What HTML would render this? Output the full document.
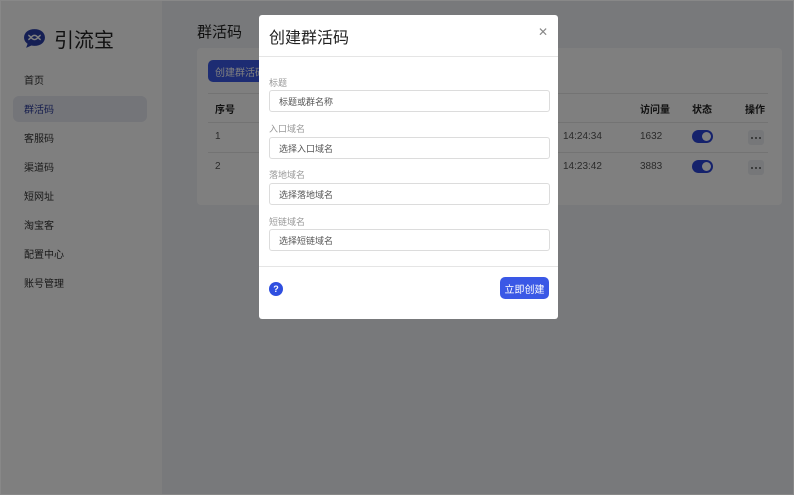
<!DOCTYPE html>
<html><head><meta charset="utf-8"><style>
*{margin:0;padding:0;box-sizing:border-box}
body{width:794px;height:495px;overflow:hidden;font-family:"Liberation Sans","Noto Sans CJK SC",sans-serif;background:#f1f3f6;position:relative;font-size:10px;color:#333}
.side{position:absolute;left:0;top:0;width:162px;height:495px;background:#fff}
.logo{position:absolute;left:23px;top:24px;display:flex;align-items:center}
.logo span{font-size:20px;margin-left:8px;color:#222}
.nav{position:absolute;left:24px;font-size:10px;color:#333}
.act{position:absolute;left:13px;top:96px;width:134px;height:26px;background:#e8eaf2;border-radius:6px}
.title{position:absolute;left:197px;top:21px;font-size:15px;color:#222}
.card{position:absolute;left:197px;top:48px;width:585px;height:157px;background:#fff;border-radius:4px}
.btn{position:absolute;left:11px;top:12px;width:70px;height:22px;background:#3a58e6;border-radius:5px;color:#fff;font-size:10px;display:flex;align-items:center;padding-left:7px}
.t{position:absolute;font-size:10px}
.hd{font-weight:bold;color:#222}
.ln{position:absolute;left:11px;width:560px;height:1px;background:#e6e6e6}
.tog{position:absolute;width:21px;height:13px;border-radius:7px;background:#2a45d8}
.tog:after{content:"";position:absolute;right:2px;top:2px;width:9px;height:9px;border-radius:50%;background:#fff}
.dots{position:absolute;width:16px;height:15px;background:#eceff3;border-radius:3px;display:flex;align-items:center;justify-content:center;gap:2px}
.dots i{width:2px;height:2px;background:#555;border-radius:50%}
.ov{position:absolute;left:0;top:0;width:794px;height:495px;background:rgba(0,0,0,.5)}
.modal{position:absolute;left:259px;top:15px;width:299px;height:304px;background:#fff;border-radius:3px}
.mh{position:absolute;left:10px;top:9px;font-size:16px;color:#222}
.x{position:absolute;right:10px;top:10px;font-size:12px;color:#888}
.hr{position:absolute;left:0;width:299px;height:1px;background:#e5e5e5}
.lb{position:absolute;left:10px;font-size:9px;color:#999}
.in{position:absolute;left:10px;width:281px;height:22px;border:1px solid #dcdcdc;border-radius:3px;font-size:9px;color:#555;display:flex;align-items:center;padding-left:9px}
.help{position:absolute;left:10px;top:267px;width:14px;height:14px;border-radius:50%;background:#2f4fe0;color:#fff;font-size:9px;font-weight:bold;display:flex;align-items:center;justify-content:center}
.ok{position:absolute;left:241px;top:262px;width:49px;height:22px;border-radius:5px;background:#3a58e6;color:#fff;font-size:10px;display:flex;align-items:center;justify-content:center}
.frame{position:absolute;left:0;top:0;width:794px;height:495px;border:1px solid #888}
</style></head><body>
<div class="side">
<div class="logo"><svg width="23" height="21" viewBox="0 0 22 20"><path d="M11 1C5 1 1 4.5 1 9c0 2.5 1.3 4.6 3.4 6L3 19l5-2.3c1 .2 2 .3 3 .3 6 0 10-3.5 10-8S17 1 11 1z" fill="#2a3fa8"/><path d="M5 7c2 0 3 4 6 4s4-4 6-4M5 11c2 0 3-4 6-4s4 4 6 4" stroke="#fff" stroke-width="1.4" fill="none"/></svg><span>引流宝</span></div>
<div class="act"></div>
<div class="nav" style="top:72px">首页</div>
<div class="nav" style="top:101px;color:#2b3a9a">群活码</div>
<div class="nav" style="top:130px">客服码</div>
<div class="nav" style="top:159px">渠道码</div>
<div class="nav" style="top:188px">短网址</div>
<div class="nav" style="top:217px">淘宝客</div>
<div class="nav" style="top:246px">配置中心</div>
<div class="nav" style="top:275px">账号管理</div>
</div>
<div class="title">群活码</div>
<div class="card">
<div class="btn">创建群活码</div>
<div class="ln" style="top:45px"></div>
<div class="t hd" style="left:18px;top:53px">序号</div>
<div class="t hd" style="left:443px;top:53px">访问量</div>
<div class="t hd" style="left:495px;top:53px">状态</div>
<div class="t hd" style="left:548px;top:53px">操作</div>
<div class="ln" style="top:74px"></div>
<div class="t" style="left:18px;top:83px;color:#555">1</div>
<div class="t" style="left:366px;top:83px;color:#555">14:24:34</div>
<div class="t" style="left:443px;top:83px;color:#555">1632</div>
<div class="tog" style="left:495px;top:82px"></div>
<div class="dots" style="left:551px;top:82px"><i></i><i></i><i></i></div>
<div class="ln" style="top:104px"></div>
<div class="t" style="left:18px;top:113px;color:#555">2</div>
<div class="t" style="left:366px;top:113px;color:#555">14:23:42</div>
<div class="t" style="left:443px;top:113px;color:#555">3883</div>
<div class="tog" style="left:495px;top:112px"></div>
<div class="dots" style="left:551px;top:112px"><i></i><i></i><i></i></div>
</div>
<div class="ov"></div>
<div class="modal">
<div class="mh">创建群活码</div><div class="x">✕</div>
<div class="hr" style="top:41px"></div>
<div class="lb" style="top:61px">标题</div>
<div class="in" style="top:75px">标题或群名称</div>
<div class="lb" style="top:107px">入口域名</div>
<div class="in" style="top:122px">选择入口域名</div>
<div class="lb" style="top:153px">落地域名</div>
<div class="in" style="top:168px">选择落地域名</div>
<div class="lb" style="top:200px">短链域名</div>
<div class="in" style="top:214px">选择短链域名</div>
<div class="hr" style="top:251px"></div>
<div class="help">?</div>
<div class="ok">立即创建</div>
</div>
<div class="frame"></div>
</body></html>
